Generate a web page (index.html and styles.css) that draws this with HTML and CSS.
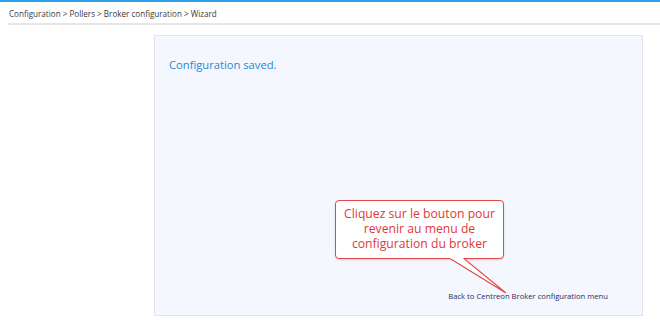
FILE: index.html
```html
<!DOCTYPE html>
<html lang="fr">
<head>
    <meta charset="UTF-8">
    <title>Wizard</title>
    <link rel="stylesheet" href="styles.css">
</head>
<body>

<div class="topbar"></div>

<div class="breadcrumb">
    <span>Configuration</span> &gt; <span>Pollers</span> &gt; <span>Broker configuration</span> &gt; <span>Wizard</span>
</div>

<div class="wizard-box">
    <div class="saved">Configuration saved.</div>
    <a class="back-link" href="#">Back to Centreon Broker configuration menu</a>

    <div class="callout">
        <div class="callout-line">Cliquez sur le bouton pour</div>
        <div class="callout-line">revenir au menu de</div>
        <div class="callout-line">configuration du broker</div>
    </div>
    <svg class="callout-tail" width="200" height="50" viewBox="0 0 200 50">
        <polygon points="115,10.5 129,10.5 171,45" fill="#ffffff" stroke="#e2474a" stroke-width="1.1" stroke-linejoin="miter"/>
        <rect x="115.6" y="8.6" width="12.8" height="2.4" fill="#ffffff"/>
    </svg>
</div>

</body>
</html>
```

FILE: styles.css
```css
body {
    margin: 0;
    background-color: #ffffff;
    font-family: "Open Sans", "Liberation Sans", sans-serif;
}

.topbar {
    height: 2px;
    background-color: #2e9fe6;
}

.breadcrumb {
    margin-left: 8px;
    padding: 6px 0 4px 1px;
    font-size: 8.1px;
    color: #3a3a3a;
    border-bottom: 2px solid #e6e6e6;
}

.wizard-box {
    position: relative;
    margin: 10px 0 0 154px;
    width: 487px;
    height: 279px;
    background-color: #f4f7fd;
    border: 1px solid #e1e3ea;
    display: flex;
    flex-direction: column;
    justify-content: space-between;
}

.saved {
    margin: 21px 0 0 14px;
    font-size: 11.2px;
    color: #2a88d6;
}

.back-link {
    align-self: flex-end;
    margin: 0 34px 14px 0;
    font-size: 7.65px;
    color: #2b2a62;
    text-decoration: none;
}

.callout {
    position: absolute;
    left: 180px;
    top: 164px;
    width: 169px;
    height: 59px;
    box-sizing: border-box;
    border: 1.2px solid #e2474a;
    border-radius: 4px;
    background-color: #ffffff;
    box-shadow: 0 1px 2px rgba(0, 0, 0, 0.15);
    color: #e0383b;
    font-size: 12.2px;
    text-align: center;
    padding-top: 5px;
    white-space: nowrap;
}

.callout-line {
    height: 15px;
    line-height: 15px;
}

.callout-tail {
    position: absolute;
    left: 180px;
    top: 212px;
    overflow: visible;
}
```
